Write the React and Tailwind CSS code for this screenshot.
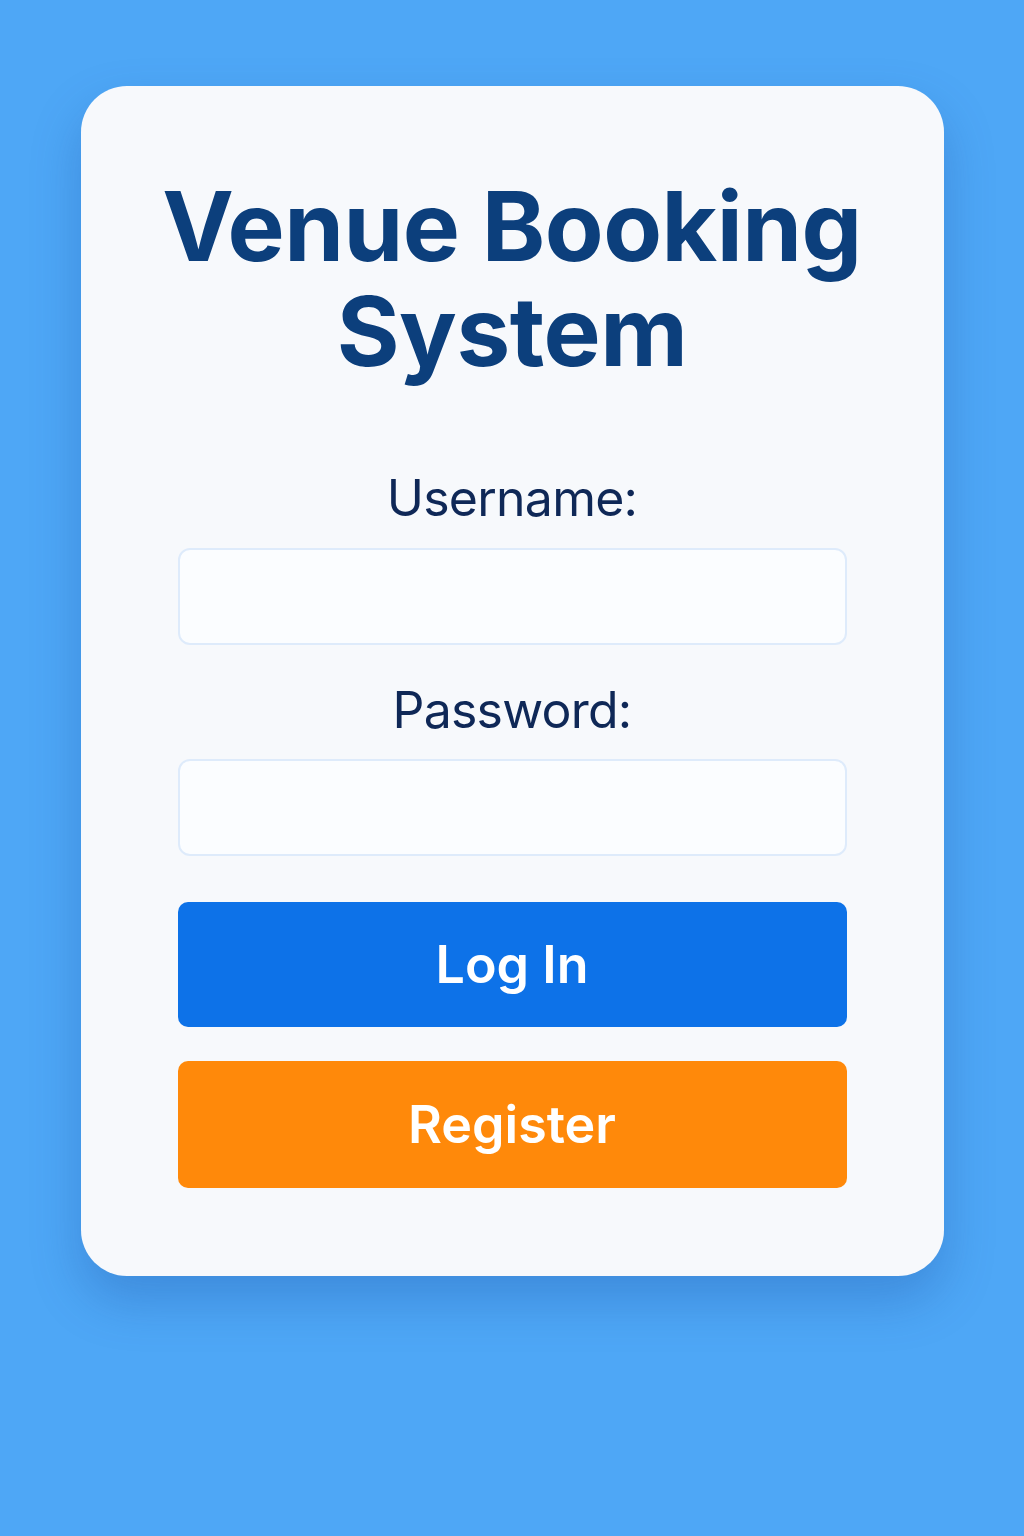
export default function App() {
  return (
    <div className="min-h-screen w-full bg-[#4ea7f6] pt-[86px] font-['Inter',sans-serif]">
      <div className="mx-auto w-[863px] rounded-[46px] bg-[#f7f9fc] px-[97px] pt-[88px] pb-[88px] shadow-[0_24px_50px_rgba(20,70,150,0.28)]">
        <h1 className="-mx-[60px] text-center text-[96px] font-bold leading-[105px] tracking-[-0.005em] text-[#0c3f7c]">
          Venue Booking
          <br />
          System
        </h1>

        <form className="mt-[86px] flex flex-col">
          <label className="text-center text-[50px] leading-[56px] tracking-[-0.015em] text-[#0f2857]">
            Username:
          </label>
          <input
            type="text"
            className="mt-[22px] h-[97px] w-full rounded-[12px] border-2 border-[#deebfb] bg-[#fbfdff] outline-none"
          />

          <label className="mt-[37px] text-center text-[50px] leading-[56px] tracking-[-0.015em] text-[#0f2857]">
            Password:
          </label>
          <input
            type="password"
            className="mt-[21px] h-[97px] w-full rounded-[12px] border-2 border-[#deebfb] bg-[#fbfdff] outline-none"
          />

          <button
            type="button"
            className="mt-[46px] h-[125px] w-full rounded-[10px] bg-[#0d72e8] text-[52px] font-semibold text-white"
          >
            Log In
          </button>
          <button
            type="button"
            className="mt-[34px] h-[127px] w-full rounded-[10px] bg-[#ff890a] text-[52px] font-semibold text-white"
          >
            Register
          </button>
        </form>
      </div>
    </div>
  );
}
